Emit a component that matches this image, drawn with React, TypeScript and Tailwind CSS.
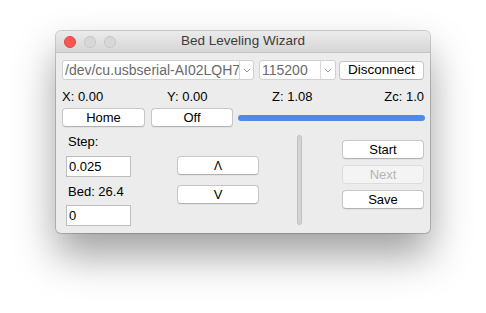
import React from "react";

const font = { fontFamily: '"Liberation Sans", Arial, sans-serif' };

function Btn({ children, w, disabled }: { children: React.ReactNode; w: string; disabled?: boolean }) {
  return (
    <div
      className={`${w} h-[19px] flex items-center justify-center rounded-[4px] border text-[13px] leading-none ${
        disabled
          ? "bg-[#f4f4f4] border-[#dcdcdc] text-[#b4b4b4]"
          : "bg-white border-[#c6c6c6] border-b-[#b2b2b2] text-black shadow-[0_1px_0_rgba(0,0,0,0.04)]"
      }`}
    >
      {children}
    </div>
  );
}

function Chevron() {
  return (
    <svg width="8" height="5" viewBox="0 0 8 5">
      <path d="M1 1 L4 4 L7 1" fill="none" stroke="#9a9a9a" strokeWidth="1" />
    </svg>
  );
}

function Combo({ text, w, tw }: { text: string; w: string; tw: string }) {
  return (
    <div className={`${w} h-[20px] flex bg-white border border-[#d0d0d0] rounded-[3px] overflow-hidden`}>
      <div className={`${tw} pl-[2px] flex items-center text-[14px] text-[#6a6a6a] whitespace-nowrap overflow-hidden`}>
        {text}
      </div>
      <div className="flex-1 border-l border-[#dadada] flex items-center justify-center">
        <Chevron />
      </div>
    </div>
  );
}

export default function App() {
  return (
    <div className="w-[486px] h-[313px] bg-white overflow-hidden pl-[56px] pt-[31px]" style={font}>
      <div className="w-[374px] h-[202px] rounded-[5px] overflow-hidden bg-[#ececec] shadow-[0_22px_42px_rgba(0,0,0,0.38),0_0_0_1px_rgba(0,0,0,0.18)] flex flex-col">
        {/* title bar */}
        <div className="h-[22px] bg-gradient-to-b from-[#ebebeb] to-[#d6d6d6] border-b border-[#c4c4c4] flex items-center relative">
          <div className="flex gap-[8px] pl-[8px]">
            <div className="w-[12px] h-[12px] rounded-full bg-[#fc5753] border border-[#df4744]" />
            <div className="w-[12px] h-[12px] rounded-full bg-[#d8d8d8] border border-[#c6c6c6]" />
            <div className="w-[12px] h-[12px] rounded-full bg-[#d8d8d8] border border-[#c6c6c6]" />
          </div>
          <div className="absolute inset-0 flex items-center justify-center text-[13.5px] text-[#3c3c3c]">
            Bed Leveling Wizard
          </div>
        </div>
        {/* content */}
        <div className="flex flex-col px-[6px] pt-[7px]">
          <div className="flex items-center h-[20px]">
            <Combo text="/dev/cu.usbserial-AI02LQH7" w="w-[192px]" tw="w-[176px]" />
            <div className="w-[5px]" />
            <Combo text="115200" w="w-[77px]" tw="w-[60px]" />
            <div className="w-[3px]" />
            <div className="w-[85px] h-[19px] flex items-center justify-center rounded-[4px] border bg-white border-[#c6c6c6] border-b-[#b2b2b2] text-[13.5px]">
              Disconnect
            </div>
          </div>
          <div className="flex h-[16px] mt-[9px] items-center text-[13px] text-black">
            <div className="w-[105px]">X: 0.00</div>
            <div className="w-[105px]">Y: 0.00</div>
            <div className="w-[105px]">Z: 1.08</div>
            <div className="flex-1 text-right">Zc: 1.0</div>
          </div>
          <div className="flex items-center mt-[3px] h-[19px]">
            <Btn w="w-[83px]">Home</Btn>
            <div className="w-[6px]" />
            <Btn w="w-[82px]">Off</Btn>
            <div className="w-[5px]" />
            <div className="flex-1 h-[6px] rounded-full bg-[#4a8ce8] mr-[-1px]" />
          </div>
          <div className="flex mt-[5px] h-[100px]">
            <div className="w-[65px] ml-[4px] flex flex-col text-[13px]">
              <div className="h-[16px] mt-[2px] pl-[2px] leading-[16px]">Step:</div>
              <div className="h-[21px] mt-[6px] bg-white border border-[#bdbdbd] flex items-center pl-[2px]">0.025</div>
              <div className="h-[16px] mt-[7px] pl-[2px] leading-[16px]">Bed: 26.4</div>
              <div className="h-[21px] mt-[5px] bg-white border border-[#bdbdbd] flex items-center pl-[2px]">0</div>
            </div>
            <div className="ml-[46px] flex flex-col pt-[24px] gap-[10px]">
              <Btn w="w-[82px]">
                <span className="text-[12px]">&#923;</span>
              </Btn>
              <Btn w="w-[82px]">V</Btn>
            </div>
            <div className="ml-[38px] pt-[3px]">
              <div className="w-[5px] h-[90px] rounded-full bg-[#d4d4d4] border border-[#c2c2c2]" />
            </div>
            <div className="ml-[40px] flex flex-col pt-[8px] gap-[6px]">
              <Btn w="w-[82px]">Start</Btn>
              <Btn w="w-[82px]" disabled>
                Next
              </Btn>
              <Btn w="w-[82px]">Save</Btn>
            </div>
          </div>
        </div>
      </div>
    </div>
  );
}
